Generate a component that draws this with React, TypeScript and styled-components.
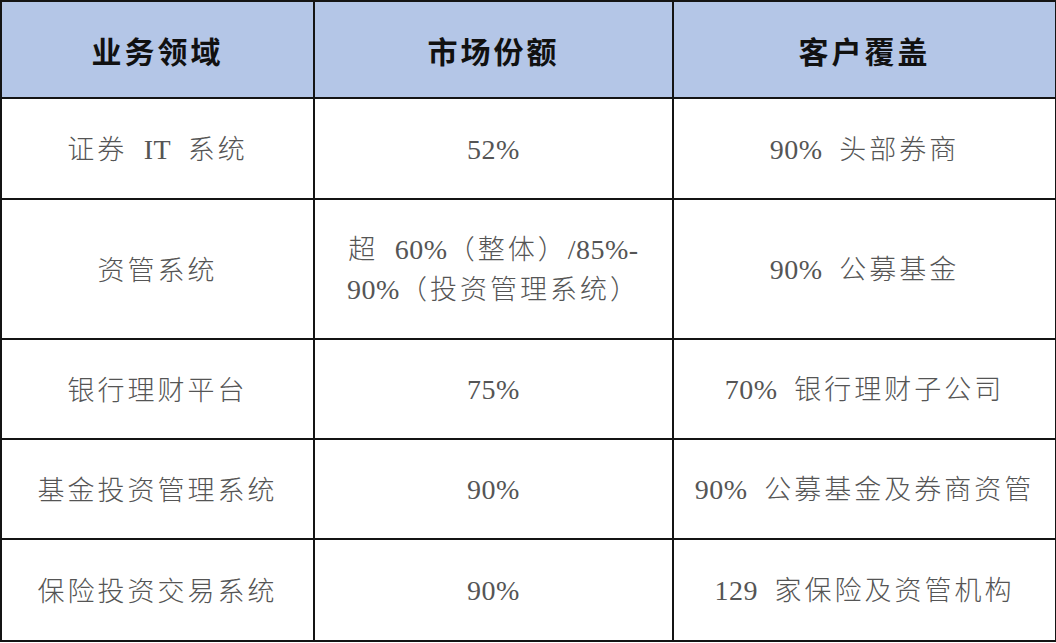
import React from "react";
import styled, { createGlobalStyle } from "styled-components";

const GlobalStyle = createGlobalStyle`
  html, body {
    margin: 0;
    padding: 0;
    background: #ffffff;
  }
`;

type Row = { area: string; share: string[]; coverage: string; height: number };

const rows: Row[] = [
  { area: "证券 IT 系统", share: ["52%"], coverage: "90% 头部券商", height: 101 },
  {
    area: "资管系统",
    share: ["超 60%（整体）/85%-", "90%（投资管理系统）"],
    coverage: "90% 公募基金",
    height: 140
  },
  { area: "银行理财平台", share: ["75%"], coverage: "70% 银行理财子公司", height: 100 },
  { area: "基金投资管理系统", share: ["90%"], coverage: "90% 公募基金及券商资管", height: 100 },
  { area: "保险投资交易系统", share: ["90%"], coverage: "129 家保险及资管机构", height: 102 }
];

// split latin runs (digits, %, letters) from CJK so they can get narrower metrics
const renderText = (text: string) =>
  text.split(/([A-Za-z0-9%/\-]+)/).map((part, i) =>
    /^[A-Za-z0-9%/\-]+$/.test(part) ? <Latin key={i}>{part}</Latin> : part.replace(/ /g, "\u2002")
  );

const App = () => (
  <>
    <GlobalStyle />
    <Table>
      <colgroup>
        <col style={{ width: 313 }} />
        <col style={{ width: 359 }} />
        <col style={{ width: 383 }} />
      </colgroup>
      <thead>
        <tr>
          <HeadCell>业务领域</HeadCell>
          <HeadCell>市场份额</HeadCell>
          <HeadCell>客户覆盖</HeadCell>
        </tr>
      </thead>
      <tbody>
        {rows.map((row) => (
          <BodyRow key={row.area} $height={row.height}>
            <Cell>{renderText(row.area)}</Cell>
            <Cell>
              {row.share.map((line, i) => (
                <Line key={i}>{renderText(line)}</Line>
              ))}
            </Cell>
            <Cell>{renderText(row.coverage)}</Cell>
          </BodyRow>
        ))}
      </tbody>
    </Table>
  </>
);

const Table = styled.table`
  width: 1055px;
  border-collapse: collapse;
  table-layout: fixed;
  font-family: "Liberation Serif", "Noto Sans CJK SC", serif;
`;

const HeadCell = styled.th`
  height: 95px;
  padding: 0;
  background: #b4c6e7;
  border: 2px solid #141414;
  color: #111111;
  font-family: "Noto Sans CJK SC", sans-serif;
  font-size: 30px;
  font-weight: 700;
  letter-spacing: 3px;
  text-align: center;
  vertical-align: middle;
`;

const BodyRow = styled.tr<{ $height: number }>`
  height: ${({ $height }) => $height}px;
`;

const Cell = styled.td`
  padding: 0 6px;
  border: 2px solid #141414;
  color: #555555;
  font-family: "Noto Sans CJK SC", sans-serif;
  font-size: 27px;
  font-weight: 300;
  letter-spacing: 3px;
  line-height: 38px;
  text-align: center;
  vertical-align: middle;
`;

const Line = styled.div`
  white-space: nowrap;
`;

const Latin = styled.span`
  font-family: "Liberation Serif", serif;
  font-size: 28px;
  font-weight: 400;
  letter-spacing: 0.5px;
`;

export default App;
